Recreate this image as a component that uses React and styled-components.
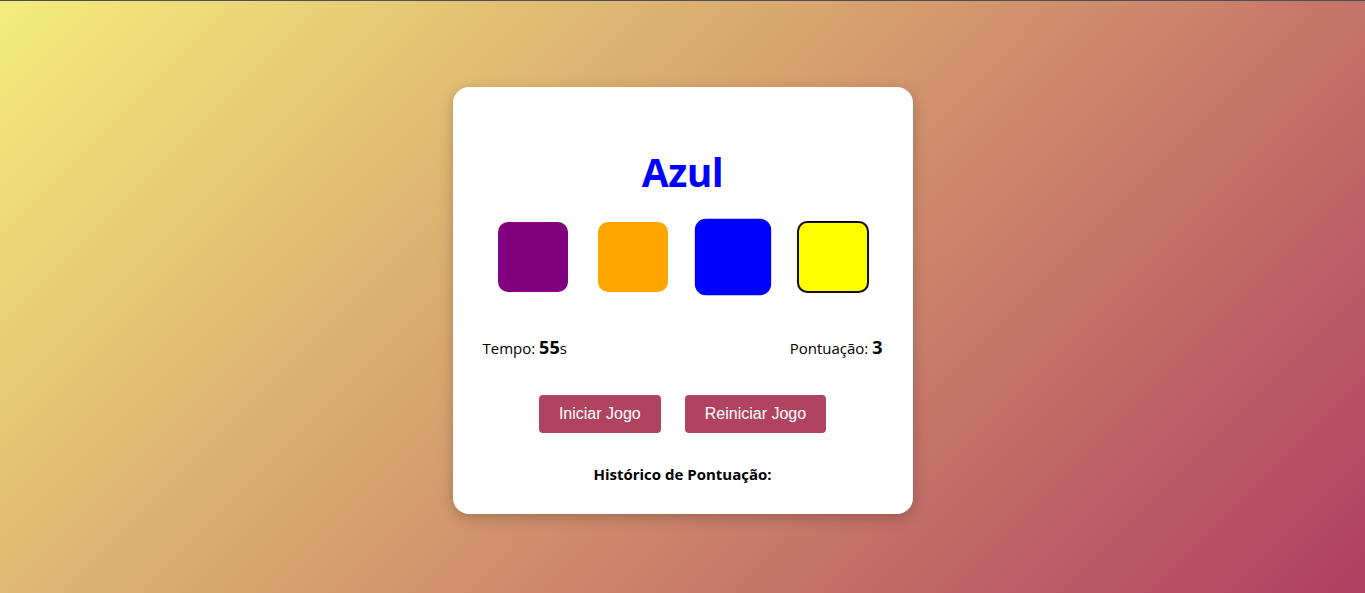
import React from "react";
import styled, { createGlobalStyle } from "styled-components";

const GlobalStyle = createGlobalStyle`
  * {
    box-sizing: border-box;
  }

  body {
    margin: 0;
    font-family: "Open Sans", "Noto Sans", sans-serif;
    color: #000;
  }
`;

const Page = styled.div`
  min-height: 100vh;
  border-top: 1px solid #4b4f5c;
  background: linear-gradient(135deg, #f4ed7b 0%, #d9a86f 40%, #c97c6a 65%, #ae3f61 100%);
  display: flex;
  justify-content: center;
  align-items: flex-start;
  padding-top: 86px;
`;

const Card = styled.div`
  width: 460px;
  background: #fff;
  border-radius: 16px;
  box-shadow: 0 4px 14px rgba(0, 0, 0, 0.22);
  padding: 30px;
  display: flex;
  flex-direction: column;
  align-items: center;
`;

const Title = styled.h1`
  margin: 31px 0 0;
  font-family: "Open Sans", sans-serif;
  font-size: 39px;
  line-height: 48px;
  font-weight: 700;
  color: #0000ff;
  letter-spacing: -0.5px;
`;

const Colors = styled.div`
  margin-top: 26px;
  display: flex;
  gap: 30px;
`;

const ColorBox = styled.div`
  width: 70px;
  height: 70px;
  border-radius: 10px;
  background: ${(p) => p.$color};
  border: ${(p) => (p.$outlined ? "2px solid #111" : "none")};
  transform: ${(p) => (p.$active ? "scale(1.09)" : p.$outlined ? "scale(1.03)" : "none")};
  cursor: pointer;
`;

const Stats = styled.div`
  width: 100%;
  margin-top: 43px;
  display: flex;
  justify-content: space-between;
  align-items: baseline;
  font-size: 15px;
  line-height: 24px;
`;

const Value = styled.strong`
  font-size: 18px;
  font-weight: 700;
`;

const Buttons = styled.div`
  margin-top: 35px;
  display: flex;
  gap: 24px;
`;

const Button = styled.button`
  height: 38px;
  padding: 0 20px;
  border: none;
  border-radius: 4px;
  background: #b04360;
  color: #fff;
  font-family: "Liberation Sans", Arial, sans-serif;
  font-size: 16px;
  cursor: pointer;
`;

const History = styled.h3`
  margin: 31px 0 0;
  font-size: 15px;
  line-height: 20px;
  font-weight: 700;
`;

const COLORS = [
  { name: "purple", color: "#800080" },
  { name: "orange", color: "#ffa500" },
  { name: "blue", color: "#0000ff", active: true },
  { name: "yellow", color: "#ffff00", outlined: true },
];

const App = () => {
  const [score] = React.useState(3);
  const [time] = React.useState(55);

  return (
    <>
      <GlobalStyle />
      <Page>
        <Card>
          <Title>Azul</Title>
          <Colors>
            {COLORS.map((c) => (
              <ColorBox
                key={c.name}
                $color={c.color}
                $active={c.active}
                $outlined={c.outlined}
              />
            ))}
          </Colors>
          <Stats>
            <span>
              Tempo: <Value>{time}</Value>s
            </span>
            <span>
              Pontuação: <Value>{score}</Value>
            </span>
          </Stats>
          <Buttons>
            <Button>Iniciar Jogo</Button>
            <Button>Reiniciar Jogo</Button>
          </Buttons>
          <History>Histórico de Pontuação:</History>
        </Card>
      </Page>
    </>
  );
};

export default App;
